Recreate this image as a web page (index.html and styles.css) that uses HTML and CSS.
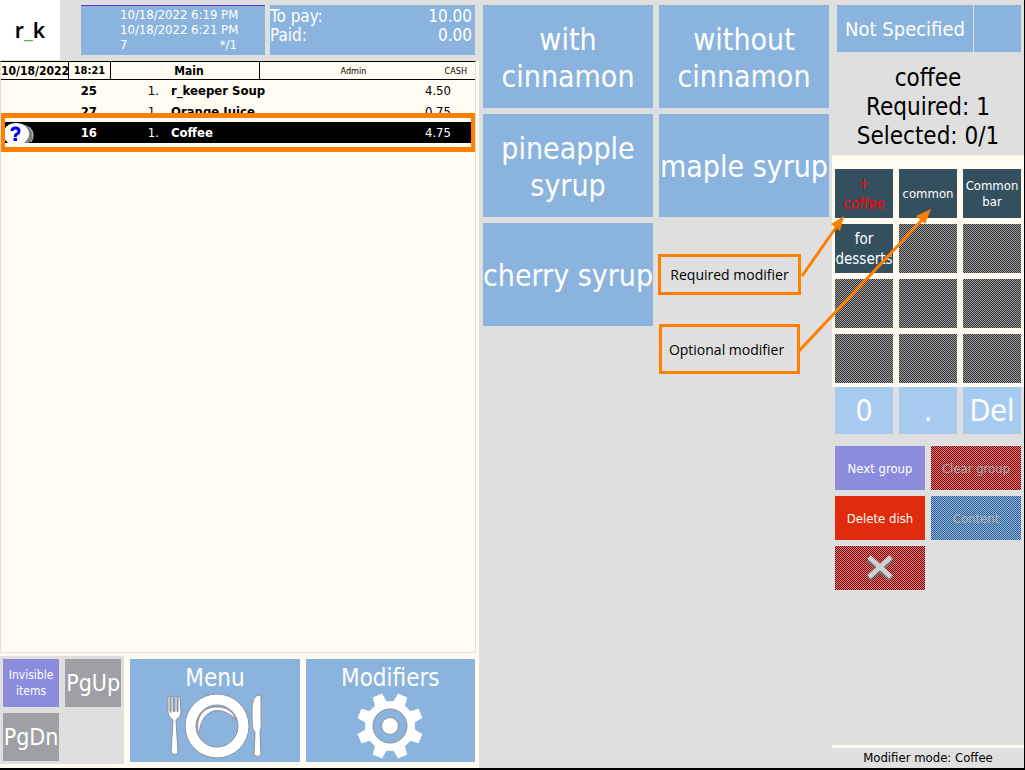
FILE: index.html
```
<!DOCTYPE html>
<html lang="en">
<head>
    <meta charset="UTF-8">
    <meta name="viewport" content="width=device-width, initial-scale=1.0">
    <title>r_keeper</title>
    <link rel="stylesheet" href="styles.css">
</head>
<body>
    <div class="screen">
        <section class="order">
            <header class="top">
                <div class="logo">r<span>_</span>k</div>
                <div class="visit">
                    <p>10/18/2022 6:19 PM</p>
                    <p>10/18/2022 6:21 PM</p>
                    <p class="split"><span>7</span><span>*/1</span></p>
                </div>
                <div class="totals">
                    <p class="split"><span>To pay:</span><span>10.00</span></p>
                    <p class="split"><span>Paid:</span><span>0.00</span></p>
                </div>
            </header>

            <div class="receipt">
                <div class="receipt-head">
                    <b class="date">10/18/2022</b>
                    <b class="time">18:21</b>
                    <b class="hall">Main</b>
                    <span class="waiter">Admin</span>
                    <span class="pay">CASH</span>
                </div>
                <table class="items">
                    <tr>
                        <td class="mark"></td>
                        <td class="code">25</td>
                        <td class="qty">1.</td>
                        <td class="name">r_keeper Soup</td>
                        <td class="price">4.50</td>
                    </tr>
                    <tr>
                        <td class="mark"></td>
                        <td class="code">27</td>
                        <td class="qty">1.</td>
                        <td class="name">Orange Juice</td>
                        <td class="price">0.75</td>
                    </tr>
                    <tr class="selected">
                        <td class="mark">
                            <svg width="30" height="21" viewBox="0 0 30 21">
                                <ellipse cx="16" cy="13" rx="13" ry="11" fill="#808080"/>
                                <path d="M25 5a11 11 0 0 1 2 15" fill="none" stroke="#d0d0d0" stroke-width="1"/>
                                <ellipse cx="12" cy="12" rx="13" ry="11" fill="#fff"/>
                                <path d="M8 9q0-3 3.500-3t3.500 3q0 2-2 3t-1.500 3" fill="none" stroke="#00f" stroke-width="3"/>
                                <rect x="9.500" y="16" width="3.500" height="3" fill="#00f"/>
                            </svg>
                        </td>
                        <td class="code">16</td>
                        <td class="qty">1.</td>
                        <td class="name">Coffee</td>
                        <td class="price">4.75</td>
                    </tr>
                </table>
                <div class="frame"></div>
            </div>

            <footer class="bottom">
                <div class="paging">
                    <button class="violet">Invisible items</button>
                    <button class="gray">PgUp</button>
                    <button class="gray">PgDn</button>
                </div>
                <button class="tile">
                    Menu
                    <svg width="100" height="66" viewBox="0 0 100 66">
                        <g fill="#fff" stroke="#8c9096" stroke-width="1">
                            <path d="M3 4q1-3 2 0v14q1 3 1 0V4q1-3 2 0v14q1 2 2 0V4q1-3 2 0v14q1 2 1 0V4q1-3 2 0l1 15q0 5-5 8l2 32q-3 5-7 0l2-32q-5-3-5-8z"/>
                            <path fill-rule="evenodd" d="M52 1a32 32 0 1 1 0 64a32 32 0 1 1 0-64zM52 12a21 21 0 1 0 0 42a21 21 0 1 0 0-42z"/>
                            <path d="M33 40C30 20 42 13 53 14c9 0 15 5 18 13C61 15 38 10 34 40z"/>
                            <path d="M94 2c-6 1-7 8-7 18 0 11 0 16 3 19l-1 23q4 3 7 0l-1-23q2-5 1-12V3q-1-1-2-1z"/>
                        </g>
                    </svg>
                </button>
                <button class="tile">
                    Modifiers
                    <svg width="66" height="66" viewBox="-33 -33 66 66">
                        <g fill="#fff">
                            <path d="M-5-33h10l1 8 3 5h-18l3-5z" transform="rotate(22.500)"/>
                            <path d="M-5-33h10l1 8 3 5h-18l3-5z" transform="rotate(67.500)"/>
                            <path d="M-5-33h10l1 8 3 5h-18l3-5z" transform="rotate(112.500)"/>
                            <path d="M-5-33h10l1 8 3 5h-18l3-5z" transform="rotate(157.500)"/>
                            <path d="M-5-33h10l1 8 3 5h-18l3-5z" transform="rotate(202.500)"/>
                            <path d="M-5-33h10l1 8 3 5h-18l3-5z" transform="rotate(247.500)"/>
                            <path d="M-5-33h10l1 8 3 5h-18l3-5z" transform="rotate(292.500)"/>
                            <path d="M-5-33h10l1 8 3 5h-18l3-5z" transform="rotate(337.500)"/>
                            <circle r="25"/>
                        </g>
                        <circle r="17" fill="#8ab4de" stroke="#8c9096"/>
                        <circle r="8.500" fill="#fff" stroke="#8c9096"/>
                    </svg>
                </button>
            </footer>
        </section>

        <section class="dishes">
            <button>with cinnamon</button>
            <button>without cinnamon</button>
            <button>pineapple syrup</button>
            <button class="one-line">maple syrup</button>
            <button class="one-line">cherry syrup</button>
        </section>

        <aside class="side">
            <div class="guest">
                <button>Not Specified</button>
                <button aria-label="Guest"></button>
            </div>
            <div class="info">
                <p>coffee</p>
                <p>Required: 1</p>
                <p>Selected: 0/1</p>
            </div>
            <div class="groups">
                <button class="required">+<br>coffee</button>
                <button class="small">common</button>
                <button class="small">Common bar</button>
                <button>for desserts</button>
                <button disabled></button>
                <button disabled></button>
                <button disabled></button>
                <button disabled></button>
                <button disabled></button>
                <button disabled></button>
                <button disabled></button>
                <button disabled></button>
            </div>
            <div class="pad">
                <button>0</button>
                <button>.</button>
                <button>Del</button>
            </div>
            <div class="actions">
                <button class="violet">Next group</button>
                <button class="off-red" disabled>Clear group</button>
                <button class="red">Delete dish</button>
                <button class="off-blue" disabled>Content</button>
                <button class="off-red" disabled aria-label="Cancel">
                    <svg width="28" height="28" viewBox="0 0 28 28">
                        <path d="M3 5l22 20M25 5L3 25" stroke="#707070" stroke-width="6"/>
                        <path d="M3 3l22 20M25 3L3 23" stroke="#d0d0d0" stroke-width="5"/>
                    </svg>
                </button>
            </div>
            <p class="status">Modifier mode: Coffee</p>
        </aside>

        <div class="callout callout-required">Required modifier</div>
        <div class="callout callout-optional">Optional modifier</div>
        <svg class="arrows" width="140" height="150" viewBox="0 0 140 150">
            <g stroke="#ff8000" stroke-width="3">
                <path d="M4 70L39 20"/>
                <path d="M1 145L124 14"/>
            </g>
            <path d="M46 10L42 25L33 18z" fill="#ff8000"/>
            <path d="M133 3L127 18L118 10z" fill="#ff8000"/>
        </svg>
    </div>
</body>
</html>
```
FILE: styles.css
```
:root {
    --blue: #8ab4de;
    --violet: #8c8cde;
    --gray: #dfdfdf;
    --cream: #fffbf0;
    --orange: #ff8000;
}
* {
    box-sizing: border-box;
}
body {
    margin: 0;
    font-family: 'DejaVu Sans Condensed', 'Noto Sans', sans-serif;
    font-size: 13px;
    color: #000;
}
p {
    margin: 0;
}
button {
    padding: 0;
    border: none;
    border-radius: 0;
    background: var(--blue);
    color: #fff;
    font-family: inherit;
}
.screen {
    position: relative;
    display: grid;
    grid-template-columns: 479fr 353fr 192fr;
    min-height: 100vh;
    background: var(--gray);
    border-right: 1px solid #000;
    border-bottom: 2px solid #000;
}

/* order */
.order {
    display: flex;
    flex-direction: column;
    min-width: 0;
    background: var(--cream);
}
.top {
    display: grid;
    grid-template-columns: 76px minmax(0, 184fr) minmax(0, 205fr);
    gap: 5px;
    height: 61px;
    padding-right: 4px;
    background: var(--gray);
}
.logo {
    width: 60px;
    height: 60px;
    background: #fff;
    font: 600 21px/60px 'Noto Sans', sans-serif;
    text-align: center;
}
.logo span {
    color: #4cb85c;
}
.visit, .totals {
    margin-top: 5px;
    height: 50px;
    background: var(--blue);
    color: #fff;
}
.visit {
    padding: 1px 28px 0 39px;
    border-top: 1px solid #6030e0;
    line-height: 15px;
    white-space: nowrap;
}
.totals {
    padding-top: 2px;
    padding-right: 3px;
    font-size: 17px;
    line-height: 19px;
}
.split {
    display: flex;
    justify-content: space-between;
}
.receipt {
    position: relative;
    flex: 1;
    margin-right: 3px;
    border: 1px solid var(--gray);
    border-top: 1px solid #000;
}
.receipt-head {
    display: flex;
    height: 18px;
    border-bottom: 1px solid #000;
    font-size: 12px;
    line-height: 18px;
    text-align: center;
}
.receipt-head b {
    border-right: 1px solid #000;
}
.date {
    width: 68px;
}
.receipt-head .time {
    width: 42px;
    font-size: 11px;
}
.hall {
    width: 149px;
    padding-left: 8px;
}
.waiter, .pay {
    font-size: 9px;
}
.waiter {
    flex: 1;
    padding-left: 10px;
}
.pay {
    width: 38px;
    padding-right: 8px;
    text-align: right;
}
.items {
    width: 100%;
    border-collapse: collapse;
    table-layout: fixed;
}
.items td {
    height: 21px;
    padding: 0;
    line-height: 21px;
}
.mark {
    width: 50px;
}
.mark svg {
    display: block;
    margin-left: 3px;
}
.code {
    width: 46px;
    font-weight: bold;
    text-align: right;
}
.qty {
    width: 74px;
    text-align: right;
}
.items .qty {
    padding-right: 12px;
}
.name {
    font-weight: bold;
}
.price {
    width: 80px;
    text-align: right;
}
.items .price {
    padding-right: 24px;
}
.selected {
    background: #000;
    color: #fff;
}
.frame {
    position: absolute;
    top: 51px;
    left: 0;
    right: 0;
    height: 39px;
    border: 4px solid var(--orange);
    border-width: 5px 4px;
    box-shadow: inset 0 4px var(--cream), inset 0 -4px var(--cream);
}
.bottom {
    display: grid;
    grid-template-columns: minmax(0, 124fr) minmax(0, 169fr) minmax(0, 169fr);
    gap: 6px;
    padding: 3px 4px 4px 0;
}
.paging {
    display: grid;
    grid-template-columns: minmax(0, 1fr) minmax(0, 1fr);
    grid-auto-rows: 48px;
    gap: 6px;
    padding: 3px;
    background: var(--gray);
}
.paging button {
    font-size: 23px;
    line-height: 16px;
}
.paging .gray {
    background: #a0a0a4;
}
.paging .violet {
    background: var(--violet);
    font-size: 12px;
}
.tile {
    display: flex;
    flex-direction: column;
    align-items: center;
    margin: 3px 0 2px;
    padding-top: 4px;
    font-size: 24px;
    line-height: 30px;
}

/* modifiers */
.dishes {
    display: grid;
    grid-template-columns: 1fr 1fr;
    grid-auto-rows: 103px;
    align-content: start;
    gap: 6px;
    padding: 5px 3px 0 4px;
}
.dishes button {
    min-width: 0;
    padding-top: 2px;
    font-size: 30px;
    line-height: 37px;
}
.dishes .one-line {
    white-space: nowrap;
}

/* side panel */
.side {
    display: flex;
    flex-direction: column;
    min-width: 0;
}
.guest {
    display: grid;
    grid-template-columns: 136fr 47fr;
    gap: 1px;
    height: 47px;
    margin: 5px 3px 0 5px;
}
.guest button {
    font-size: 20px;
    white-space: nowrap;
}
.info {
    padding: 12px 0 4px;
    font-size: 24px;
    line-height: 29px;
    text-align: center;
}
.groups, .pad {
    display: grid;
    grid-template-columns: 1fr 1fr 1fr;
    gap: 6px;
}
.groups {
    grid-auto-rows: 49px;
    padding: 14px 3px 4px;
    background: var(--cream);
}
.groups button {
    min-width: 0;
    background: #34505e;
    font-size: 15px;
    line-height: 20px;
}
.groups .small {
    font-size: 13px;
    line-height: 16px;
}
.groups .required {
    color: #f00;
}
.groups button:disabled {
    background: conic-gradient(#303030 25%, #a0a0a4 0 50%, #303030 0 75%, #a0a0a4 0) 0 0 / 2px 2px;
}
.pad {
    grid-auto-rows: 47px;
    padding: 0 3px;
}
.pad button {
    background: #a6caf0;
    font-size: 30px;
}
.actions {
    display: grid;
    grid-template-columns: 1fr 1fr;
    grid-auto-rows: 44px;
    gap: 6px;
    padding: 12px 3px;
}
.actions button {
    font-size: 13px;
}
.actions .violet {
    background: var(--violet);
}
.actions .red {
    background: #e02c0c;
}
.actions .off-red {
    background: conic-gradient(#900000 25%, #c88080 0 50%, #900000 0 75%, #c88080 0) 0 0 / 2px 2px;
    color: #a8a8a8;
}
.actions .off-blue {
    background: conic-gradient(#306090 25%, #8ab4de 0 50%, #306090 0 75%, #8ab4de 0) 0 0 / 2px 2px;
    color: #b0b0b0;
}
.actions svg {
    display: block;
    margin: 0 auto;
}
.status {
    margin-top: auto;
    border-top: 3px solid var(--cream);
    line-height: 20px;
    text-align: center;
}

/* notes over the screen */
.callout {
    position: absolute;
    border: 3px solid var(--orange);
    font-family: 'Open Sans', sans-serif;
    font-size: 14px;
    text-align: center;
}
.callout-required {
    top: 254px;
    left: 658px;
    width: 143px;
    height: 41px;
    line-height: 36px;
}
.callout-optional {
    top: 324px;
    left: 659px;
    width: 141px;
    height: 50px;
    padding-right: 6px;
    line-height: 46px;
}
.arrows {
    position: absolute;
    top: 206px;
    left: 798px;
}
```
